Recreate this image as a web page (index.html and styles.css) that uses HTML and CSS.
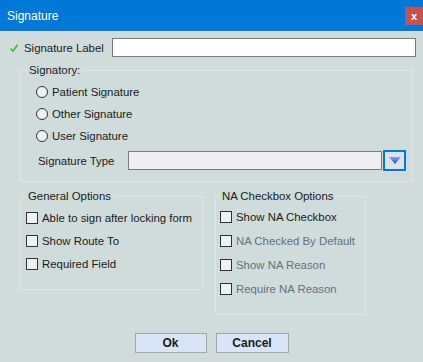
FILE: index.html
```html
<!DOCTYPE html>
<html>
<head>
    <title>Signature</title>
    <link rel="stylesheet" href="styles.css">
</head>
<body>
    <div class="dialog">
        <div class="title-bar">
            <span class="title">Signature</span>
            <button type="button" class="close-button">x</button>
        </div>

        <div class="content">
            <div class="label-row">
                <svg class="check-icon" width="8" height="8" viewBox="0 0 8 8">
                    <path d="M0.5 4.5 L3 7 L7.5 1" fill="none" stroke="#3cb83c" stroke-width="1.6"/>
                </svg>
                <label for="sigLabel" class="row-label">Signature Label</label>
                <input type="text" id="sigLabel" class="text-input">
            </div>

            <fieldset class="group signatory">
                <legend>Signatory:</legend>
                <div class="radio-row"><span class="radio"></span>Patient Signature</div>
                <div class="radio-row"><span class="radio"></span>Other Signature</div>
                <div class="radio-row"><span class="radio"></span>User Signature</div>
                <div class="type-row">
                    <span class="type-label">Signature Type</span>
                    <div class="combo"></div>
                    <div class="combo-button">
                        <svg width="12" height="7" viewBox="0 0 12 7">
                            <defs>
                                <linearGradient id="tri" x1="0" y1="0" x2="0" y2="1">
                                    <stop offset="0" stop-color="#7aa8ff"/>
                                    <stop offset="1" stop-color="#1d4fd6"/>
                                </linearGradient>
                            </defs>
                            <polygon points="0,0 12,0 6,7" fill="url(#tri)"/>
                        </svg>
                    </div>
                </div>
            </fieldset>

            <div class="options">
                <fieldset class="group general">
                    <legend>General Options</legend>
                    <div class="check-row"><span class="box"></span>Able to sign after locking form</div>
                    <div class="check-row"><span class="box"></span>Show Route To</div>
                    <div class="check-row"><span class="box"></span>Required Field</div>
                </fieldset>

                <fieldset class="group na">
                    <legend>NA Checkbox Options</legend>
                    <div class="check-row"><span class="box"></span>Show NA Checkbox</div>
                    <div class="check-row disabled"><span class="box"></span>NA Checked By Default</div>
                    <div class="check-row disabled"><span class="box"></span>Show NA Reason</div>
                    <div class="check-row disabled"><span class="box"></span>Require NA Reason</div>
                </fieldset>
            </div>

            <div class="buttons">
                <button type="button" class="dlg-button ok">Ok</button>
                <button type="button" class="dlg-button">Cancel</button>
            </div>
        </div>
    </div>
</body>
</html>
```

FILE: styles.css
```css
body {
    margin: 0;
    font-family: "Liberation Sans", Arial, sans-serif;
    font-size: 11.4px;
    color: #1a1a1a;
    background-color: #d0dcdc;
}

.dialog {
    width: 423px;
    height: 362px;
    background-color: #d0dcdc;
}

.title-bar {
    display: flex;
    align-items: center;
    justify-content: space-between;
    height: 31px;
    background-color: #0078d7;
}

.title {
    margin-left: 7px;
    color: #fff;
    font-size: 12px;
}

.close-button {
    width: 18px;
    height: 18px;
    padding: 0;
    border: none;
    background-color: #c75050;
    color: #fff;
    font-family: "Liberation Sans", Arial, sans-serif;
    font-size: 11px;
    font-weight: bold;
    line-height: 16px;
}

.content {
    padding-top: 7px;
}

.label-row {
    display: flex;
    align-items: center;
    height: 19px;
}

.check-icon {
    margin-left: 10px;
    margin-right: 6px;
}

.row-label {
    width: 88px;
}

.text-input {
    box-sizing: border-box;
    width: 304px;
    height: 19px;
    margin: 0;
    border: 1px solid #7a7a7a;
    background-color: #fff;
}

.group {
    margin: 0;
    border: 1px solid #dfe5e5;
    min-width: 0;
}

.group legend {
    padding: 0 2px;
    line-height: 14px;
}

.signatory {
    box-sizing: border-box;
    width: 393px;
    margin: 6px 0 0 20px;
    padding: 4px 6px 10px 15px;
}

.signatory legend {
    margin-left: -9px;
}

.radio-row {
    display: flex;
    align-items: center;
    height: 22px;
}

.radio {
    box-sizing: border-box;
    flex-shrink: 0;
    width: 12px;
    height: 12px;
    margin-right: 4px;
    border: 1px solid #333;
    border-radius: 50%;
    background-color: #eef2f2;
}

.type-row {
    display: flex;
    align-items: center;
    margin-top: 3px;
}

.type-label {
    margin-left: 2px;
    width: 90px;
}

.combo {
    box-sizing: border-box;
    width: 255px;
    height: 19px;
    border: 1px solid #7a7a7a;
    background-color: #efefef;
}

.combo-button {
    box-sizing: border-box;
    display: flex;
    align-items: center;
    justify-content: center;
    width: 23px;
    height: 21px;
    margin-left: 1px;
    border: 2px solid #0078d7;
    background-color: #e1e1e1;
}

.options {
    display: flex;
    align-items: flex-start;
    margin-top: 7px;
}

.general {
    box-sizing: border-box;
    width: 183px;
    margin-left: 20px;
    padding: 3px 5px 14px 5px;
}

.na {
    box-sizing: border-box;
    width: 151px;
    margin-left: 12px;
    padding: 2px 5px 13px 4px;
}

.check-row {
    display: flex;
    align-items: center;
    height: 23px;
    white-space: nowrap;
}

.na .check-row {
    height: 24px;
}

.check-row.disabled {
    color: #65707c;
}

.box {
    box-sizing: border-box;
    flex-shrink: 0;
    width: 12px;
    height: 12px;
    margin-right: 4px;
    border: 1px solid #333;
    background-color: #eef2f2;
}

.buttons {
    display: flex;
    justify-content: center;
    gap: 9px;
    margin-top: 18px;
}

.dlg-button {
    box-sizing: border-box;
    width: 73px;
    height: 20px;
    padding: 0;
    border: 1px solid #a5a5a5;
    background-color: #d9e5f6;
    color: #1a1a1a;
    font-family: "Liberation Sans", Arial, sans-serif;
    font-size: 12px;
    font-weight: bold;
}

.dlg-button.ok {
    width: 72px;
}
```
